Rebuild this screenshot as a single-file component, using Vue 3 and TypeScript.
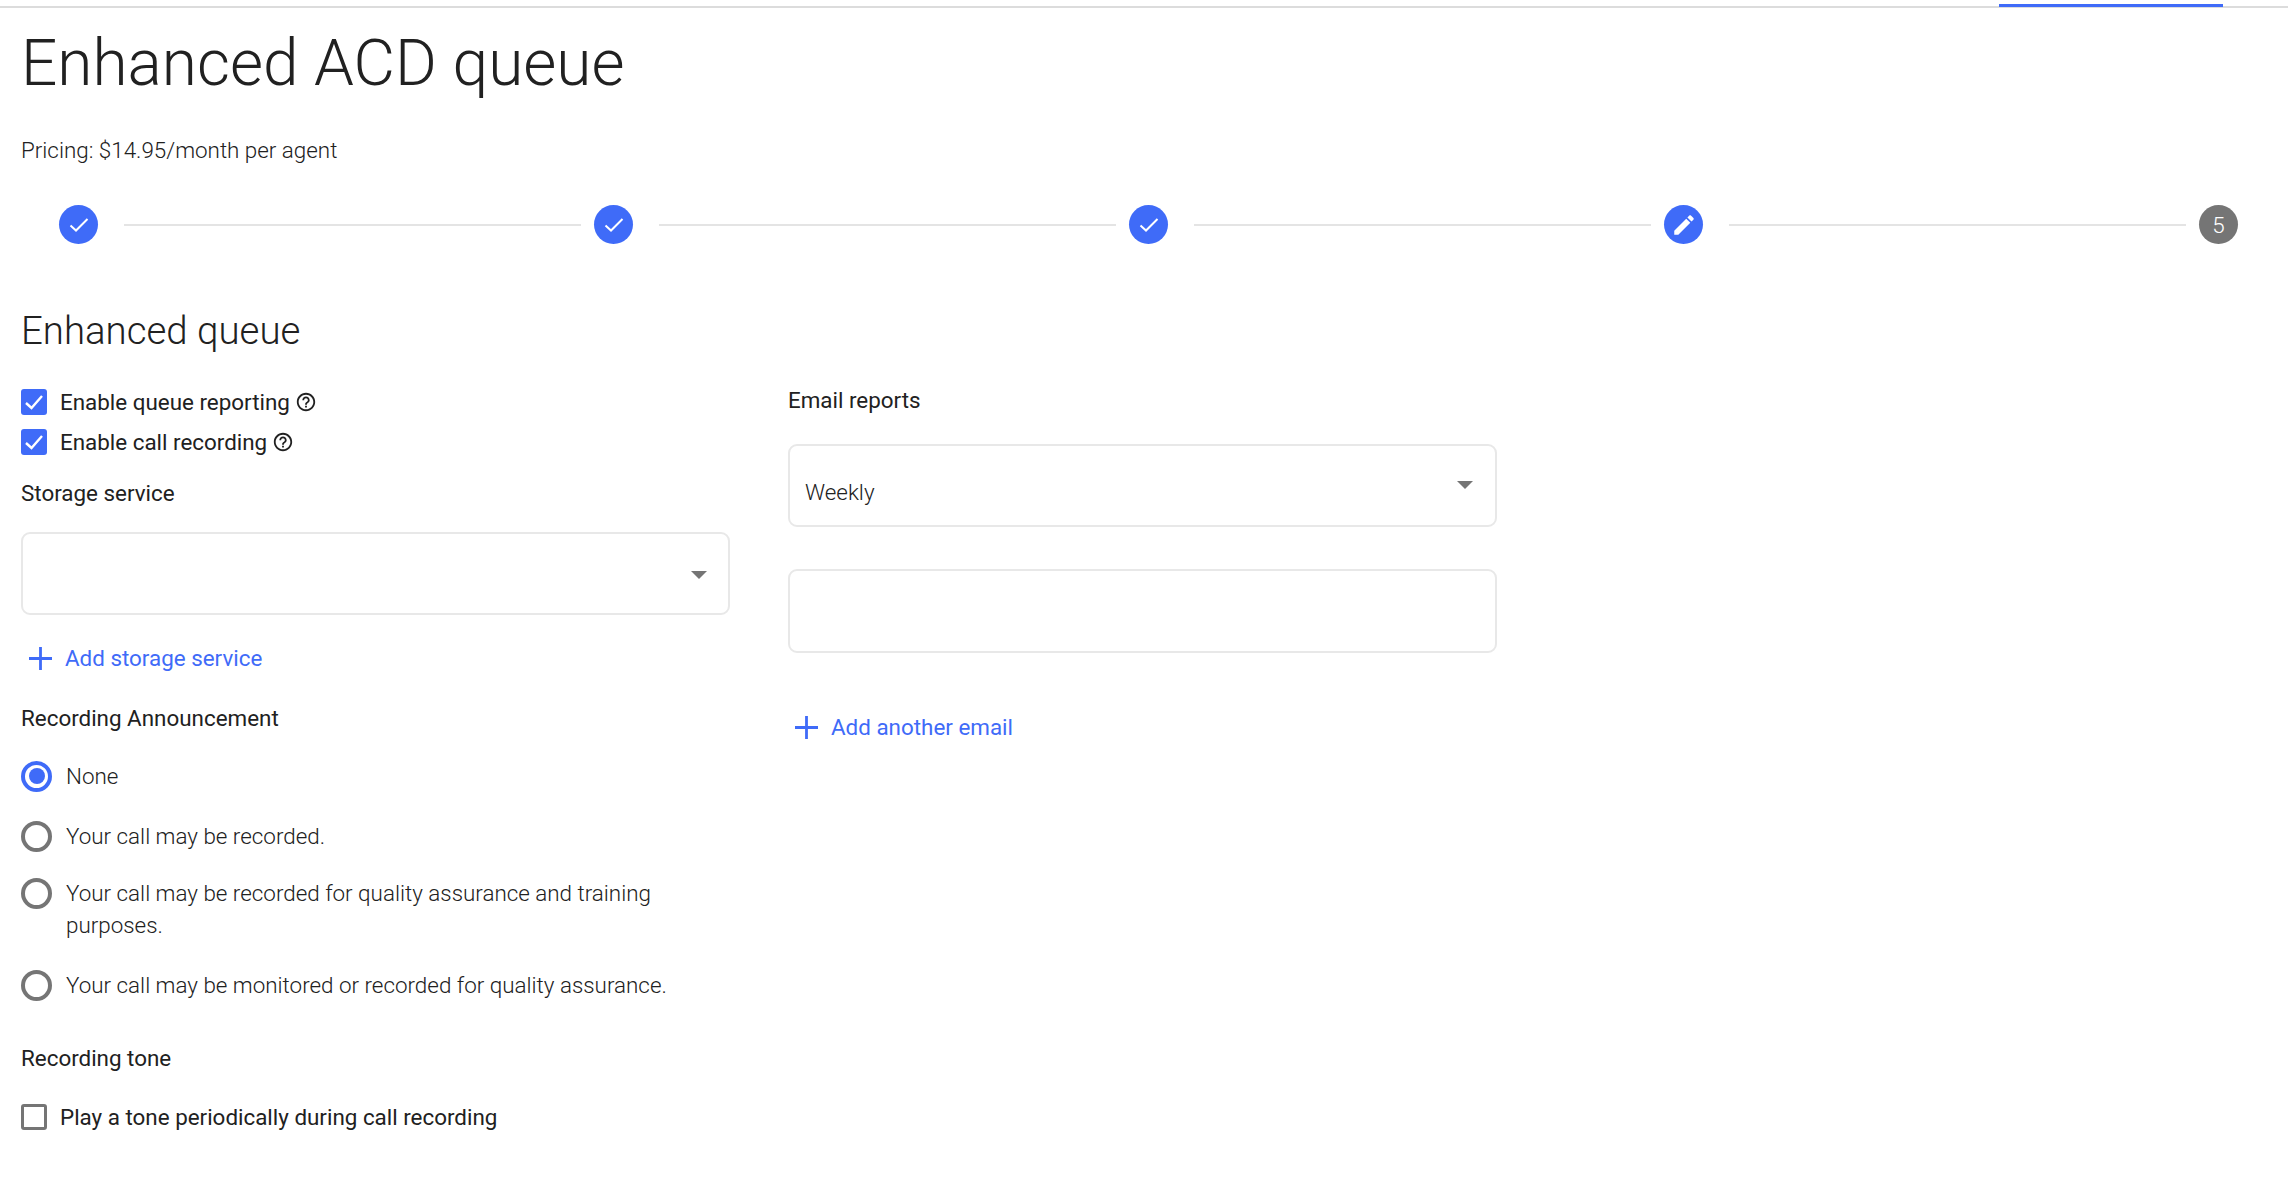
<script setup lang="ts">
const steps: Array<'done' | 'edit' | 'todo'> = ['done', 'done', 'done', 'edit', 'todo']
const radios = [
  { text: 'None', on: true, cls: 'r1' },
  { text: 'Your call may be recorded.', on: false, cls: 'r2' },
  { text: 'Your call may be recorded for quality assurance and training purposes.', on: false, cls: 'r3' },
  { text: 'Your call may be monitored or recorded for quality assurance.', on: false, cls: 'r4' },
]
const helpPath = 'M11 18h2v-2h-2v2zm1-16C6.48 2 2 6.48 2 12s4.48 10 10 10 10-4.48 10-10S17.52 2 12 2zm0 18c-4.41 0-8-3.59-8-8s3.59-8 8-8 8 3.59 8 8-3.59 8-8 8zm0-14c-2.21 0-4 1.79-4 4h2c0-1.1.9-2 2-2s2 .9 2 2c0 2-3 1.75-3 5h2c0-2.25 3-2.5 3-5 0-2.21-1.79-4-4-4z'
</script>

<template>
  <div class="page">
    <div class="topbar"><div class="tab-indicator"></div></div>
    <h1 class="title">Enhanced ACD queue</h1>
    <p class="pricing">Pricing: $14.95/month per agent</p>

    <div class="stepper">
      <template v-for="(s, i) in steps" :key="i">
        <div class="step" :class="{ grey: s === 'todo' }">
          <svg v-if="s === 'done'" class="step-icon" viewBox="0 0 26 26">
            <path d="M4.5 13.5 L10 18.5 L21.5 7" fill="none" stroke="#fff" stroke-width="2" />
          </svg>
          <svg v-else-if="s === 'edit'" class="step-icon" viewBox="0 0 24 24">
            <path fill="#fff" d="M3 17.25V21h3.75L17.81 9.94l-3.75-3.75L3 17.25zM20.71 7.04c.39-.39.39-1.02 0-1.41l-2.34-2.34c-.39-.39-1.02-.39-1.41 0l-1.83 1.83 3.75 3.75 1.83-1.83z" />
          </svg>
          <span v-else>5</span>
        </div>
        <div v-if="i < steps.length - 1" class="connector"></div>
      </template>
    </div>

    <h2 class="section">Enhanced queue</h2>

    <div class="columns">
      <div class="col">
        <label class="check-row">
          <span class="box on">
            <svg viewBox="0 0 26 26"><path d="M5 14 L10.5 19 L21 7" fill="none" stroke="#fff" stroke-width="2.4" /></svg>
          </span>
          <span class="check-text">Enable queue reporting</span>
          <svg class="help" viewBox="0 0 24 24"><path :d="helpPath" fill="#212121" /></svg>
        </label>
        <label class="check-row">
          <span class="box on">
            <svg viewBox="0 0 26 26"><path d="M5 14 L10.5 19 L21 7" fill="none" stroke="#fff" stroke-width="2.4" /></svg>
          </span>
          <span class="check-text">Enable call recording</span>
          <svg class="help" viewBox="0 0 24 24"><path :d="helpPath" fill="#212121" /></svg>
        </label>

        <div class="label storage-label">Storage service</div>
        <div class="field select storage-select"><span class="arrow"></span></div>

        <a class="add add-storage">
          <svg class="plus" viewBox="0 0 23 23"><path d="M11.5 0v23M0 11.5h23" stroke="#3f6bf8" stroke-width="2.8" fill="none" /></svg>
          Add storage service
        </a>

        <div class="label announce-label">Recording Announcement</div>
        <div v-for="r in radios" :key="r.text" class="radio-row" :class="r.cls">
          <span class="radio" :class="{ on: r.on }"></span>
          <span class="radio-text">{{ r.text }}</span>
        </div>

        <div class="label tone-label">Recording tone</div>
        <label class="check-row tone-row">
          <span class="box"></span>
          <span class="check-text">Play a tone periodically during call recording</span>
        </label>
      </div>

      <div class="col">
        <div class="label email-label">Email reports</div>
        <div class="field select email-select">
          <span class="weekly">Weekly</span>
          <span class="arrow arrow-high"></span>
        </div>
        <div class="field email-input"></div>
        <a class="add add-email">
          <svg class="plus" viewBox="0 0 23 23"><path d="M11.5 0v23M0 11.5h23" stroke="#3f6bf8" stroke-width="2.8" fill="none" /></svg>
          Add another email
        </a>
      </div>
    </div>
  </div>
</template>

<style>
html, body { background: #fff; }
</style>

<style scoped>
.page {
  font-family: Roboto, "Liberation Sans", sans-serif;
  color: #212121;
  font-size: 22.4px;
  line-height: 32px;
  height: 1186px;
  box-sizing: border-box;
  overflow: hidden;
  background: #fff;
}
.topbar {
  position: relative;
  height: 8px;
  box-sizing: border-box;
  border-bottom: 2px solid #dcdcdc;
}
.tab-indicator {
  position: absolute;
  left: 1999px;
  top: 4px;
  width: 224px;
  height: 3px;
  background: #3f6bf8;
}
.title {
  margin: 17.5px 0 0 21px;
  font-size: 63.9px;
  line-height: 76px;
  font-weight: 300;
}
.pricing {
  margin: 32px 0 0 21px;
  font-weight: 300;
}
.stepper {
  display: flex;
  align-items: center;
  margin-top: 39.5px;
  padding: 0 50px 0 59px;
}
.step {
  flex: none;
  width: 39px;
  height: 39px;
  border-radius: 50%;
  background: #3f6bf8;
  color: #fff;
  display: flex;
  align-items: center;
  justify-content: center;
  font-weight: 300;
}
.step.grey { background: #757575; }
.step-icon { width: 26px; height: 26px; }
.connector {
  flex: 1;
  height: 2px;
  background: #e4e4e4;
  margin: 0 13.5px 0 26px;
}
.section {
  margin: 63px 0 0 21px;
  font-size: 38.4px;
  line-height: 48px;
  font-weight: 300;
}
.columns {
  display: grid;
  grid-template-columns: 709px 709px;
  column-gap: 58px;
  margin: 27px 0 0 21px;
}
.check-row {
  display: flex;
  align-items: center;
  height: 40px;
}
.box {
  flex: none;
  width: 26px;
  height: 26px;
  box-sizing: border-box;
  border: 3px solid #757575;
  border-radius: 3px;
  margin-right: 13px;
}
.box.on {
  border: none;
  background: #3f6bf8;
}
.box svg { display: block; width: 26px; height: 26px; }
.help { width: 22px; height: 22px; margin-left: 5px; }
.label { font-weight: 400; }
.storage-label { margin-top: 15px; }
.field {
  box-sizing: border-box;
  border: 2px solid #e8e8e8;
  border-radius: 9px;
  position: relative;
  background: #fff;
}
.select { height: 83px; }
.storage-select { margin-top: 23px; }
.arrow {
  position: absolute;
  right: 21px;
  top: 37px;
  width: 0;
  height: 0;
  border-left: 8px solid transparent;
  border-right: 8px solid transparent;
  border-top: 8px solid #757575;
}
.arrow-high { top: 35px; right: 22px; }
.add {
  display: flex;
  align-items: center;
  color: #3f6bf8;
  font-weight: 400;
  padding-left: 8px;
}
.plus { width: 23px; height: 23px; margin-right: 13px; }
.add-storage { margin-top: 27px; }
.announce-label { margin-top: 28px; }
.radio-row {
  display: flex;
  align-items: flex-start;
  width: 660px;
  font-weight: 300;
}
.radio {
  flex: none;
  width: 31px;
  height: 31px;
  box-sizing: border-box;
  border: 4px solid #757575;
  border-radius: 50%;
  margin-right: 14px;
  position: relative;
  top: 0.5px;
}
.radio.on { border-color: #3f6bf8; }
.radio.on::after {
  content: "";
  position: absolute;
  inset: 3.5px;
  border-radius: 50%;
  background: #3f6bf8;
}
.r1 { margin-top: 26px; }
.r2 { margin-top: 28px; }
.r3 { margin-top: 25px; }
.r4 { margin-top: 28px; }
.tone-label { margin-top: 41px; }
.tone-row { margin-top: 23px; }
.email-label { margin-top: 2px; }
.email-select { margin-top: 28px; }
.weekly {
  position: absolute;
  left: 15px;
  top: 30px;
  font-weight: 300;
}
.email-input { margin-top: 42px; height: 84px; }
.add-email { margin-top: 58px; padding-left: 7px; }
</style>
